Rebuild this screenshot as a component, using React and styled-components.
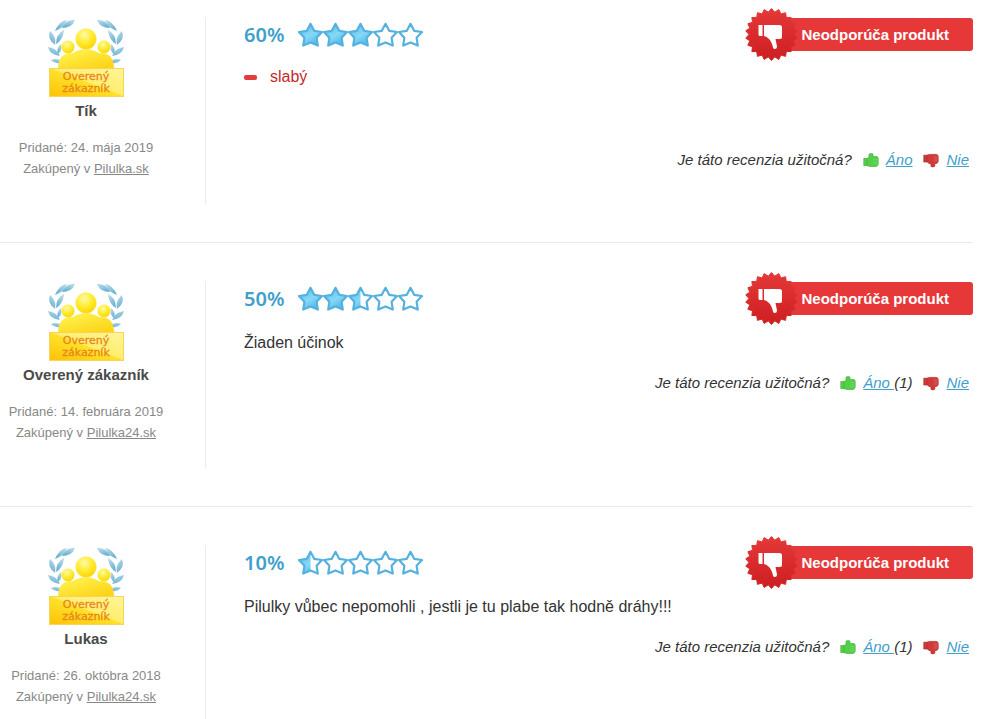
import { useId } from "react";
import styled, { createGlobalStyle } from "styled-components";

const reviews = [
    {
        id: 1,
        name: "Tík",
        date: "24. mája 2019",
        shop: "Pilulka.sk",
        rating: 60,
        halfStars: 6,
        cons: ["slabý"],
        text: "",
        yes: 0,
    },
    {
        id: 2,
        name: "Overený zákazník",
        date: "14. februára 2019",
        shop: "Pilulka24.sk",
        rating: 50,
        halfStars: 5,
        cons: [],
        text: "Žiaden účinok",
        yes: 1,
    },
    {
        id: 3,
        name: "Lukas",
        date: "26. októbra 2018",
        shop: "Pilulka24.sk",
        rating: 10,
        halfStars: 1,
        cons: [],
        text: "Pilulky vůbec nepomohli , jestli je tu plabe tak hodně dráhy!!!",
        yes: 1,
    },
];

export default function App() {
    return (
        <>
            <GlobalStyle />
            <ReviewList>
                {reviews.map(review => (
                    <Review key={review.id} review={review} />
                ))}
            </ReviewList>
        </>
    );
}

function Review({ review }) {
    return (
        <ReviewItem>
            <Author>
                <CustomerBadge />
                <h3>{review.name}</h3>
                <p>Pridané: {review.date}</p>
                <p>Zakúpený v <a href="#shop">{review.shop}</a></p>
            </Author>
            <Content>
                <Header>
                    <Percent>{review.rating}%</Percent>
                    <Stars value={review.halfStars} />
                    <Verdict>
                        <Seal />
                        <VerdictLabel>Neodporúča produkt</VerdictLabel>
                    </Verdict>
                </Header>
                {review.cons.length > 0 && (
                    <Cons>
                        {review.cons.map(con => <li key={con}>{con}</li>)}
                    </Cons>
                )}
                <Comment>{review.text}</Comment>
                <Helpful>
                    <span>Je táto recenzia užitočná?</span>
                    <Vote>
                        <ThumbUp />
                        <span>
                            <a href="#yes">Áno{review.yes > 0 && " "}</a>
                            {review.yes > 0 && `(${review.yes})`}
                        </span>
                    </Vote>
                    <Vote>
                        <ThumbDown />
                        <a href="#no">Nie</a>
                    </Vote>
                </Helpful>
            </Content>
        </ReviewItem>
    );
}

const STAR = "M12.5 1.8 L16.2 8.8 L24 10 L18.6 15.7 L19.8 23.6 L12.5 20.4 L5.2 23.6 L6.4 15.7 L1 10 L8.8 8.8 Z";

function Stars({ value }) {
    const id = useId();
    return (
        <svg width="126" height="26" viewBox="0 0 126 26" role="img" aria-label={`${value / 2} z 5`}>
            <defs>
                <linearGradient id={`${id}fill`} x1="0" y1="0" x2="0.6" y2="1">
                    <stop offset="0" stopColor="#52b9e6" />
                    <stop offset="0.6" stopColor="#86d8f7" />
                    <stop offset="1" stopColor="#4fb8e6" />
                </linearGradient>
                <clipPath id={`${id}half`}>
                    <rect width="12.5" height="26" />
                </clipPath>
            </defs>
            {[0, 1, 2, 3, 4].map(i => (
                <g key={i} transform={`translate(${i * 25} 0)`}>
                    {value > i * 2 && (
                        <path
                            d={STAR}
                            fill={`url(#${id}fill)`}
                            clipPath={value === i * 2 + 1 ? `url(#${id}half)` : undefined}
                        />
                    )}
                    <path d={STAR} fill="none" stroke="#55b1df" strokeWidth="2.2" strokeLinejoin="round" />
                </g>
            ))}
        </svg>
    );
}

const TEETH = 22;
const sealPoints = Array.from({ length: TEETH * 2 }, (_, i) => {
    const r = i % 2 === 0 ? 26 : 22.6;
    const a = (i / (TEETH * 2)) * Math.PI * 2 - Math.PI / 2;
    return `${(26.5 + r * Math.cos(a)).toFixed(2)},${(26.5 + r * Math.sin(a)).toFixed(2)}`;
}).join(" ");

function Seal() {
    const id = useId();
    return (
        <SealIcon viewBox="0 0 53 53" aria-hidden="true">
            <defs>
                <linearGradient id={id} x1="0" y1="0" x2="0" y2="1">
                    <stop offset="0" stopColor="#e53838" />
                    <stop offset="1" stopColor="#cd1f22" />
                </linearGradient>
            </defs>
            <polygon
                points={sealPoints}
                fill={`url(#${id})`}
                stroke={`url(#${id})`}
                strokeLinejoin="round"
            />
            <path d="M13.5 17 H17.5 V28 H15 Q13.5 28 13.5 26.5 Z" fill="#fff" />
            <path
                d="M19 17 H34.5 Q37 17 37 19.5 V29 Q37 31 35 31 H30.5 L32 38.5 Q32 41 29.8 41 Q28.5 41 28 39.5 Q26.5 33 23.5 30.5 Q22 28.5 19 28 Z"
                fill="#fff"
            />
        </SealIcon>
    );
}

function ThumbUp() {
    return (
        <svg width="16" height="16" viewBox="0 0 16 16" aria-hidden="true">
            <g fill="#55cf49" stroke="#3fb336" strokeWidth="0.7" strokeLinejoin="round">
                <path d="M0.8 6.5 H4.2 V13.6 H0.8 Z" />
                <path d="M4.2 6.5 L6 5 V2.2 Q7.5 1 10 2 V4.6 H14 Q15.4 5 15.2 7 V12 Q14.8 14.4 13 14.4 H6.5 L4.2 13.6 Z" />
                <path d="M10.5 7.8 H15 M10.5 10 H15 M10.5 12 H14.6" fill="none" stroke="#fff" strokeOpacity="0.25" />
            </g>
        </svg>
    );
}

function ThumbDown() {
    return (
        <svg width="16" height="16" viewBox="0 0 16 16" aria-hidden="true">
            <g fill="#cf3b3b" stroke="#b02a2a" strokeWidth="0.7" strokeLinejoin="round">
                <path d="M0.8 3.2 H4.2 V10 H0.8 Z" />
                <path d="M4.2 3 L6.5 2.4 H13 Q15 2.4 15.2 4.4 V9.6 Q15 11.2 13.4 11.4 H11.8 V14.2 Q10 15.6 8 14.4 V12 L6 11.4 L4.2 10 Z" />
                <path d="M10.5 5 H15 M10.5 7 H15 M10.5 9 H14.8" fill="none" stroke="#fff" strokeOpacity="0.25" />
            </g>
        </svg>
    );
}

function Leaves({ id }) {
    return (
        <g fill={`url(#${id})`}>
            <path d="M28 3 Q19 2 15 11 Q25 11 28 3 Z" />
            <path d="M20 3 Q12 4 8 14 Q17 11 20 3 Z" />
            <path d="M3 14 Q0 22 8 28 Q10 20 3 14 Z" />
            <path d="M17 13 Q9 17 9 27 Q16 23 17 13 Z" />
            <path d="M1 30 Q3 38 13 39 Q10 31 1 30 Z" />
            <path d="M14 27 Q9 31 11 37 Q16 33 14 27 Z" />
            <path d="M4 43 Q9 48 16 45 Q11 40 4 43 Z" />
        </g>
    );
}

function CustomerBadge() {
    const id = useId();
    return (
        <svg width="78" height="83" viewBox="0 0 78 83" role="img" aria-label="Overený zákazník">
            <defs>
                <linearGradient id={`${id}leaf`} x1="0.6" y1="0" x2="0.2" y2="1">
                    <stop offset="0" stopColor="#b4d9e9" />
                    <stop offset="1" stopColor="#62acd0" />
                </linearGradient>
                <radialGradient id={`${id}head`} cx="0.42" cy="0.3" r="0.75">
                    <stop offset="0" stopColor="#fff9a8" />
                    <stop offset="0.5" stopColor="#ffec30" />
                    <stop offset="1" stopColor="#fbd000" />
                </radialGradient>
                <linearGradient id={`${id}body`} gradientUnits="userSpaceOnUse" x1="34" y1="32" x2="40" y2="54">
                    <stop offset="0" stopColor="#fff04a" />
                    <stop offset="1" stopColor="#fcd51a" />
                </linearGradient>
                <linearGradient id={`${id}box`} x1="0" y1="1" x2="1" y2="0">
                    <stop offset="0" stopColor="#ffc107" />
                    <stop offset="0.5" stopColor="#ffe12a" />
                    <stop offset="0.52" stopColor="#ffee6e" />
                    <stop offset="1" stopColor="#fff59a" />
                </linearGradient>
            </defs>
            <Leaves id={`${id}leaf`} />
            <g transform="translate(78 0) scale(-1 1)">
                <Leaves id={`${id}leaf`} />
            </g>
            <g fill={`url(#${id}body)`}>
                <path d="M11 52 Q11 37 23 36 Q31 36 35 44 V52 Z" />
                <path d="M67 52 Q67 37 55 36 Q47 36 43 44 V52 Z" />
                <path d="M18 52 Q20 33 39 32 Q58 33 60 52 Z" />
            </g>
            <g fill={`url(#${id}head)`} stroke="#fff3a0" strokeWidth="0.5">
                <circle cx="21" cy="30" r="6.5" />
                <circle cx="57" cy="30" r="6.5" />
                <circle cx="39" cy="22" r="10.5" />
            </g>
            <rect x="2.5" y="51.5" width="74" height="28" fill={`url(#${id}box)`} stroke="#fbd35a" />
            <BadgeText x="39" y="63" textAnchor="middle">Overený</BadgeText>
            <BadgeText x="39" y="75" textAnchor="middle">zákazník</BadgeText>
        </svg>
    );
}

const GlobalStyle = createGlobalStyle`
    * {
        box-sizing: border-box;
    }
    body {
        margin: 0;
        background-color: #fff;
        color: #333;
        font-family: Arial, 'Liberation Sans', sans-serif;
        font-size: 16px;
    }
    h3, p, ul {
        margin: 0;
        padding: 0;
    }
    svg {
        display: block;
        flex-shrink: 0;
    }
`

const ReviewList = styled.main`
    height: 100vh;
    overflow: hidden;
    padding-right: 15px;
`

const ReviewItem = styled.article`
    display: flex;
    padding: 38px 0;
    border-bottom: 1px solid #ebebeb;
    &:first-child {
        padding-top: 17px;
    }
`

const Author = styled.aside`
    display: flex;
    flex-direction: column;
    align-items: center;
    width: 206px;
    min-height: 187px;
    padding-right: 33px;
    border-right: 1px solid #ebebeb;
    flex-shrink: 0;
    h3 {
        margin-bottom: 15px;
        color: #4a4a4a;
        font-size: 15px;
        line-height: 22px;
    }
    p {
        color: #888;
        font-size: 13px;
        line-height: 21px;
    }
    a {
        color: #888;
    }
`

const BadgeText = styled.text`
    fill: #e8861a;
    stroke: #e8861a;
    stroke-width: 0.3px;
    font-family: 'DejaVu Sans', sans-serif;
    font-size: 11px;
`

const Content = styled.div`
    display: flex;
    flex-direction: column;
    flex: 1;
    padding-left: 38px;
`

const Header = styled.header`
    display: flex;
    align-items: center;
    height: 35px;
`

const Percent = styled.strong`
    width: 54px;
    color: #419fcb;
    font-family: 'Noto Sans', sans-serif;
    font-size: 20px;
    font-weight: 600;
`

const Verdict = styled.div`
    display: flex;
    align-items: center;
    margin-left: auto;
`

const SealIcon = styled.svg`
    position: relative;
    width: 53px;
    height: 53px;
    margin-right: -26px;
`

const VerdictLabel = styled.strong`
    padding: 0 24px 0 29px;
    border-radius: 3px;
    background-color: #e63838;
    color: #fff;
    font-size: 15px;
    line-height: 33px;
`

const Cons = styled.ul`
    margin: 13px 0 4px;
    list-style: none;
    li {
        display: flex;
        align-items: center;
        gap: 13px;
        color: #c62828;
        line-height: 24px;
    }
    li::before {
        content: "";
        width: 13px;
        height: 5px;
        border-radius: 2px;
        background-color: #e23c3c;
    }
`

const Comment = styled.p`
    min-height: 24px;
    margin-top: 15px;
    line-height: 24px;
`

const Helpful = styled.footer`
    display: flex;
    justify-content: flex-end;
    gap: 11px;
    margin-top: 16px;
    padding-right: 4px;
    font-size: 15px;
    font-style: italic;
    line-height: 24px;
    a {
        color: #419fcb;
    }
`

const Vote = styled.div`
    display: flex;
    align-items: center;
    gap: 7px;
`
